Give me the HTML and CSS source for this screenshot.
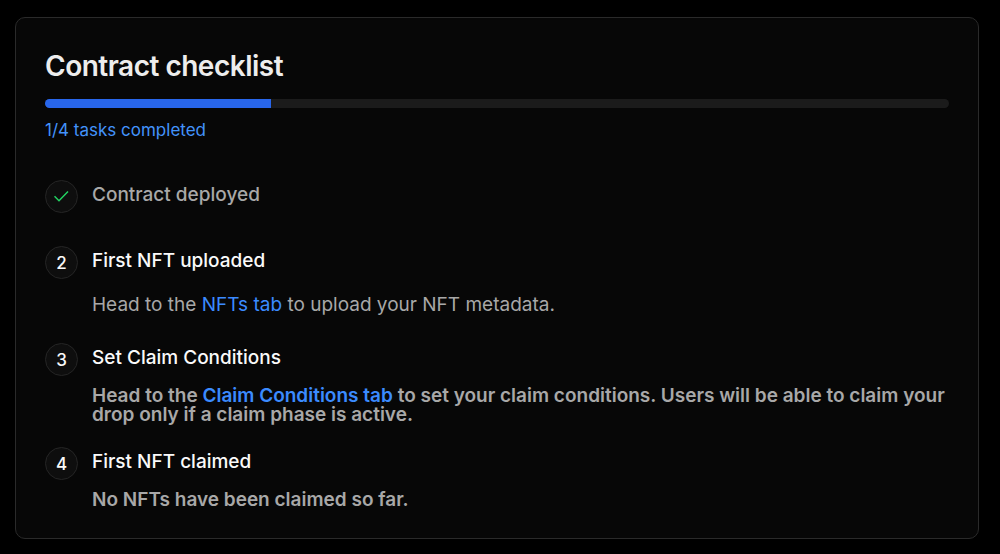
FILE: index.html
```html
<!DOCTYPE html>
<html lang="en">
<head>
    <meta charset="UTF-8">
    <meta name="viewport" content="width=device-width, initial-scale=1.0">
    <title>Contract checklist</title>
    <link rel="stylesheet" href="styles.css">
</head>
<body>
    <main class="card">
        <h1 class="card-title">Contract checklist</h1>
        <div class="progress" role="progressbar" aria-label="Tasks completed" aria-valuemin="0" aria-valuemax="4" aria-valuenow="1">
            <div class="progress-fill" style="width: 25%"></div>
        </div>
        <p class="progress-label">1/4 tasks completed</p>

        <ol class="steps">
            <li class="step done">
                <span class="step-marker">
                    <svg class="check" viewBox="0 0 15 15" aria-hidden="true">
                        <path d="M0.5 7.2 L5 11.7 L14 2.5" />
                    </svg>
                </span>
                <div class="step-body">
                    <h2 class="step-title">Contract deployed</h2>
                </div>
            </li>
            <li class="step">
                <span class="step-marker">2</span>
                <div class="step-body">
                    <h2 class="step-title">First NFT uploaded</h2>
                    <p class="step-text light">Head to the <a href="#nfts">NFTs tab</a> to upload your NFT metadata.</p>
                </div>
            </li>
            <li class="step">
                <span class="step-marker">3</span>
                <div class="step-body">
                    <h2 class="step-title">Set Claim Conditions</h2>
                    <p class="step-text">Head to the <a href="#claim-conditions">Claim Conditions tab</a> to set your claim conditions. Users will be able to claim your drop only if a claim phase is active.</p>
                </div>
            </li>
            <li class="step">
                <span class="step-marker">4</span>
                <div class="step-body">
                    <h2 class="step-title">First NFT claimed</h2>
                    <p class="step-text">No NFTs have been claimed so far.</p>
                </div>
            </li>
        </ol>
    </main>
</body>
</html>
```
FILE: styles.css
```css
/* Global Styles */
* {
    margin: 0;
    padding: 0;
    box-sizing: border-box;
}

body {
    background-color: #000;
    color: #fafafa;
    font-family: Inter, "Liberation Sans", sans-serif;
    padding: 17px 21px 15px 15px;
}

.card {
    background-color: #070707;
    border: 1px solid #2a2a2a;
    border-radius: 10px;
    padding: 29px;
}

.card-title {
    color: #ededed;
    font-size: 28px;
    font-weight: 600;
    line-height: 38px;
    letter-spacing: -0.5px;
}

/* Progress bar */
.progress {
    height: 9px;
    margin-top: 14px;
    background-color: #1b1b1b;
    border-radius: 5px;
    overflow: hidden;
}

.progress-fill {
    height: 100%;
    background-color: #2866eb;
}

.progress-label {
    margin-top: 10px;
    color: #4393fb;
    font-size: 17px;
    line-height: 24px;
}

/* Steps */
.steps {
    display: flex;
    flex-direction: column;
    gap: 23px;
    margin-top: 38px;
    list-style: none;
}

.step {
    display: flex;
    gap: 14px;
}

.step-marker {
    display: flex;
    flex-shrink: 0;
    justify-content: center;
    align-items: center;
    width: 33px;
    height: 33px;
    background-color: #0e0e0e;
    border: 1px solid #252525;
    border-radius: 50%;
    font-size: 17px;
    font-weight: 500;
}

.check {
    width: 15px;
    height: 15px;
    fill: none;
    stroke: #22d362;
    stroke-width: 1.5;
}

.step-body {
    flex: 1;
}

.step-title {
    margin-bottom: 13px;
    font-size: 19px;
    font-weight: 500;
    line-height: 30px;
}

.done .step-title {
    color: #a8a8a8;
}

.step-text {
    color: #a8a8a8;
    font-size: 19px;
    font-weight: 600;
    line-height: 19px;
}

.step-text.light {
    font-weight: 400;
    line-height: 31px;
}

.step-text a {
    color: #3b8bff;
    text-decoration: none;
}
```
